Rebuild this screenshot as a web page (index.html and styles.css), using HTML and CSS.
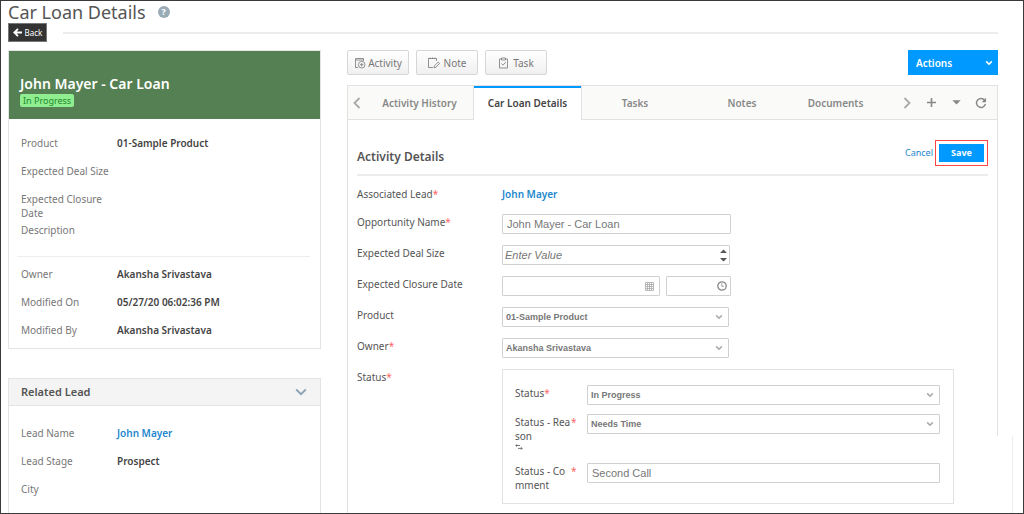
FILE: index.html
```html
<!DOCTYPE html>
<html lang="en">
<head>
<meta charset="utf-8">
<title>Car Loan Details</title>
<link rel="stylesheet" href="styles.css">
</head>
<body class="page">
<svg class="defs" width="0" height="0" aria-hidden="true">
  <symbol id="chev" viewBox="0 0 8 8"><path d="M1.2 2.4 4 5.2 6.8 2.4" fill="none" stroke="currentColor" stroke-width="1.6"/></symbol>
</svg>
<header class="top">
  <div class="title-row">
    <h1 class="title">Car Loan Details</h1>
    <button class="help" aria-label="Help">?</button>
  </div>
  <div class="back-row">
    <button class="back"><svg width="9" height="9" viewBox="0 0 9 9" aria-hidden="true"><path d="M9 4.5H1.5M5 .8 1.3 4.5 5 8.2" fill="none" stroke="currentColor" stroke-width="1.8"/></svg>Back</button>
    <div class="rule"></div>
  </div>
</header>
<div class="columns">
  <aside class="side">
    <section class="card">
      <div class="hero">
        <h2 class="hero-name">John Mayer - Car Loan</h2>
        <span class="badge">In Progress</span>
      </div>
      <dl class="facts">
        <div class="fact"><dt>Product</dt><dd>01-Sample Product</dd></div>
        <div class="fact"><dt>Expected Deal Size</dt><dd></dd></div>
        <div class="fact"><dt>Expected Closure<br>Date</dt><dd></dd></div>
        <div class="fact"><dt>Description</dt><dd></dd></div>
      </dl>
      <dl class="facts facts-meta">
        <div class="fact"><dt>Owner</dt><dd>Akansha Srivastava</dd></div>
        <div class="fact"><dt>Modified On</dt><dd>05/27/20 06:02:36 PM</dd></div>
        <div class="fact"><dt>Modified By</dt><dd>Akansha Srivastava</dd></div>
      </dl>
    </section>
    <section class="card related">
      <div class="related-head">
        <h2 class="related-title">Related Lead</h2>
        <button class="plain slate" aria-label="Collapse"><svg width="12" height="8" viewBox="0 0 12 8"><path d="M1.2 1.5 6 6.2l4.800-4.700" fill="none" stroke="currentColor" stroke-width="1.900"/></svg></button>
      </div>
      <dl class="facts facts-lead">
        <div class="fact"><dt>Lead Name</dt><dd><a class="link" href="#">John Mayer</a></dd></div>
        <div class="fact"><dt>Lead Stage</dt><dd>Prospect</dd></div>
        <div class="fact"><dt>City</dt><dd></dd></div>
      </dl>
    </section>
  </aside>
  <main class="main">
    <div class="toolbar">
      <button class="tool"><svg width="12" height="12" viewBox="0 0 12 12" fill="none" stroke="currentColor" stroke-width=".8" aria-hidden="true"><path d="M4 10.500H1.500v-9h8V4M1.500 3h8"/><circle cx="7.700" cy="7.700" r="3.300"/><path d="M7.700 6v3.400M6 7.700h3.400"/></svg>Activity</button>
      <button class="tool tool-wide"><svg width="12" height="12" viewBox="0 0 12 12" fill="none" stroke="currentColor" stroke-width=".8" aria-hidden="true"><path d="M8.500 4V1.500h-8v9H5M2 .5v1.500M4.500.5v1.500M7 .5v1.500"/><path d="m6 10.800.5-2L10.200 5l1.400 1.400L8 10.200z"/></svg>Note</button>
      <button class="tool tool-wide"><svg width="11" height="12" viewBox="0 0 11 12" fill="none" stroke="currentColor" stroke-width=".8" aria-hidden="true"><path d="M3.500 2h-2v9h8V2h-2M3.500 1h4v2h-4zM3.300 6.500 5 8.200 7.800 5"/></svg>Task</button>
      <button class="actions">Actions<svg width="8" height="8" aria-hidden="true"><use href="#chev"/></svg></button>
    </div>
    <div class="panel">
      <nav class="tabs">
        <button class="plain scroll" aria-label="Previous tabs"><svg width="8" height="12" viewBox="0 0 8 12"><path d="M6.500 1 1.500 6l5 5" fill="none" stroke="currentColor" stroke-width="1.800"/></svg></button>
        <button class="tab">Activity History</button>
        <button class="tab tab-on">Car Loan Details</button>
        <button class="tab">Tasks</button>
        <button class="tab">Notes</button>
        <button class="tab">Documents</button>
        <div class="tab-tools">
          <button class="plain" aria-label="Next tabs"><svg width="8" height="12" viewBox="0 0 8 12"><path d="m1.500 1 5 5-5 5" fill="none" stroke="currentColor" stroke-width="1.800"/></svg></button>
          <button class="plain dark" aria-label="Add tab"><svg width="9" height="9" viewBox="0 0 9 9"><path d="M4.500 0v9M0 4.500h9" stroke="currentColor" stroke-width="1.600"/></svg></button>
          <button class="plain dark" aria-label="Tab menu"><svg width="9" height="5" viewBox="0 0 9 5"><path d="M.3.200h8.400L4.500 4.600z" fill="currentColor"/></svg></button>
          <button class="plain dark" aria-label="Refresh"><svg width="12" height="12" viewBox="0 0 12 12"><path d="M9.600 3.200A4.500 4.500 0 1 0 10.400 7" fill="none" stroke="currentColor" stroke-width="1.400"/><path d="M11 .8v4.400H6.600z" fill="currentColor"/></svg></button>
        </div>
      </nav>
      <form class="form">
        <div class="form-head">
          <h2 class="form-title">Activity Details</h2>
          <a class="cancel" href="#">Cancel</a>
          <div class="save-mark"><button class="save" type="button">Save</button></div>
        </div>
        <div class="fields">
          <div class="row row-text"><span class="label">Associated Lead<i class="req">*</i></span><a class="link" href="#">John Mayer</a></div>
          <div class="row"><label class="label" for="name">Opportunity Name<i class="req">*</i></label><input class="box mid" id="name" type="text" value="John Mayer - Car Loan"></div>
          <div class="row"><label class="label" for="deal">Expected Deal Size</label><div class="wrap mid"><input class="box deal" id="deal" type="number" placeholder="Enter Value"><svg class="adorn spin" width="7" height="13" viewBox="0 0 7 13" aria-hidden="true"><path d="M0 4 3.500.5 7 4zM0 9l3.500 3.500L7 9z" fill="currentColor"/></svg></div></div>
          <div class="row"><label class="label" for="date">Expected Closure Date</label>
            <div class="pair mid">
              <div class="wrap"><input class="box" id="date" type="text"><svg class="adorn" width="9" height="9" viewBox="0 0 9 9" fill="none" stroke="currentColor" aria-hidden="true"><path d="M.5.500h8v8h-8zM.5 2.500h8M.5 4.500h8M.5 6.500h8M2.500.500v8M4.500.500v8M6.500.500v8" stroke-width=".8"/></svg></div>
              <div class="wrap"><input class="box" id="time" type="text" aria-label="Closure time"><svg class="adorn clock" width="10" height="10" viewBox="0 0 10 10" fill="none" stroke="currentColor" aria-hidden="true"><circle cx="5" cy="5" r="4.200" stroke-width="1.300"/><path d="M4.800 2.300v3h2" stroke-width=".8"/></svg></div>
            </div></div>
          <div class="row"><label class="label" for="product">Product</label><div class="wrap mid-pick"><select class="box pick" id="product"><option>01-Sample Product</option></select><svg class="adorn" width="8" height="8" aria-hidden="true"><use href="#chev"/></svg></div></div>
          <div class="row"><label class="label" for="owner">Owner<i class="req">*</i></label><div class="wrap mid-pick"><select class="box pick" id="owner"><option>Akansha Srivastava</option></select><svg class="adorn" width="8" height="8" aria-hidden="true"><use href="#chev"/></svg></div></div>
          <div class="row"><span class="label">Status<i class="req">*</i></span>
            <div class="group">
              <div class="sub"><label class="sub-label" for="status">Status<i class="req">*</i></label><div class="wrap"><select class="box pick" id="status"><option>In Progress</option></select><svg class="adorn" width="8" height="8" aria-hidden="true"><use href="#chev"/></svg></div></div>
              <div class="sub sub-tall"><label class="sub-label" for="reason"><span class="sub-text">Status - Rea<br>son<svg class="link-icon" width="8" height="6" viewBox="0 0 8 6" fill="none" stroke="currentColor" stroke-width=".8" aria-hidden="true"><path d="M5 1.500H.8M2 .3.800 1.500 2 2.700M3 4.400h4.200M6 3.200l1.200 1.200L6 5.600"/></svg></span><i class="req">*</i></label><div class="wrap"><select class="box pick" id="reason"><option>Needs Time</option></select><svg class="adorn" width="8" height="8" aria-hidden="true"><use href="#chev"/></svg></div></div>
              <div class="sub"><label class="sub-label" for="comment"><span class="sub-text">Status - Co<br>mment</span><i class="req">*</i></label><input class="box" id="comment" type="text" value="Second Call"></div>
            </div></div>
        </div>
      </form>
      <div class="edges" aria-hidden="true"><div class="edge-top"></div><div class="edge-low"></div></div>
    </div>
  </main>
</div>
</body>
</html>
```

FILE: styles.css
```css
* { box-sizing: border-box; }
.page {
  margin: 0;
  height: 100vh;
  border: 1px solid #3a3a3a;
  overflow: hidden;
  display: flex;
  flex-direction: column;
  background: #fff;
  color: #555;
  font: 10px/14px "Noto Sans", "Open Sans", sans-serif;
}
.defs { position: absolute; }
button, input, select { font: inherit; margin: 0; }
button { cursor: pointer; }
svg { display: block; flex: none; }
h1, h2, dl, dd { margin: 0; }
.link { color: #2287cd; font-weight: 600; text-decoration: none; }
.req { color: #f66; font-style: normal; }
.plain { display: flex; align-items: center; justify-content: center; padding: 0; border: 0; background: none; color: #aaa; }
.dark { color: #888; }
.slate { color: #8ea3b8; }

.top { padding: 0 25px 0 7px; }
.title-row { display: flex; align-items: center; gap: 12px; height: 22px; }
.title { font-size: 18px; line-height: 22px; font-weight: 400; }
.help { width: 12px; height: 12px; padding: 0; border: 0; border-radius: 50%; background: #9aabb8; color: #fff; font-size: 9px; line-height: 12px; font-weight: 700; }
.back-row { display: flex; align-items: center; gap: 16px; }
.back { display: flex; align-items: center; justify-content: center; gap: 3px; width: 39px; height: 19px; padding: 0; border: 1px solid #777; background: #333; color: #fff; font-size: 8px; line-height: 10px; }
.rule { flex: 1; height: 2px; background: #ececec; }

.columns { flex: 1; min-height: 0; display: grid; grid-template-columns: 313px minmax(0, 1fr); gap: 26px; padding: 8px 25px 0 7px; }
.side { display: flex; flex-direction: column; gap: 29px; }
.card { flex: none; border: 1px solid #e4e4e4; }
.related { flex: 1 0 auto; border-bottom: 0; }
.hero { display: flex; flex-direction: column; align-items: flex-start; gap: 1px; height: 68px; padding: 24px 11px 0; background: #558053; }
.hero-name { color: #fff; font-size: 14px; line-height: 18px; font-weight: 600; }
.badge { padding: 0 3px; border-radius: 2px; background: #90ee90; color: #1d8a2d; font-size: 9px; line-height: 13px; }
.facts { margin: 0 10px 0 8px; padding: 17px 5px 5px 4px; }
.facts-meta { padding: 10px 5px 0 4px; border-top: 1px solid #eee; }
.facts-meta .fact:last-child { min-height: 25px; }
.facts-lead { padding: 20px 5px 0 4px; }
.fact { display: grid; grid-template-columns: 96px 1fr; min-height: 28px; padding-bottom: 3px; }
.fact dt { color: #777; }
.fact dd { color: #444; font-weight: 600; }
.related-head { display: flex; align-items: center; justify-content: space-between; height: 27px; padding: 0 13px 0 12px; border-bottom: 1px solid #e4e4e4; background: #f4f4f4; }
.related-title { font-size: 11px; line-height: 16px; font-weight: 600; }

.main { display: flex; flex-direction: column; gap: 10px; }
.toolbar { display: flex; gap: 7px; }
.tool { display: flex; align-items: center; justify-content: center; gap: 2px; width: 62px; height: 25px; padding: 0; border: 1px solid #d6d6d6; border-radius: 2px; background: linear-gradient(#fff, #f0f0f0); color: #777; }
.tool-wide { gap: 4px; }
.actions { display: flex; align-items: center; justify-content: space-between; width: 90px; height: 25px; margin-left: auto; padding: 0 5px 0 8px; border: 0; background: #09f; color: #fff; font-weight: 600; }
.panel { position: relative; flex: 1; border: 1px solid #e2e2e2; border-width: 1px 0 0 1px; }
.tabs { display: grid; grid-template-columns: 18px 107px 109px 106px 108px minmax(0, 1fr) 122px; height: 34px; margin-right: 1px; }
.tabs > * { background: #fafaf8; border-bottom: 1px solid #e2e2e2; }
.tab { padding: 0; border: 0; border-bottom: 1px solid #e2e2e2; color: #888; font-weight: 600; }
.tab-on { border: 1px solid #e2e2e2; border-width: 0 1px; background: #fff; color: #444; box-shadow: inset 0 2px #09f; }
.tab-tools { display: grid; grid-template-columns: repeat(4, 1fr); padding: 0 4px 0 20px; }

.form { padding: 0 10px 0 9px; }
.form-head { display: flex; align-items: center; height: 56px; padding-top: 12px; border-bottom: 2px solid #ececec; }
.form-title { font-size: 12px; line-height: 18px; padding-top: 8px; font-weight: 600; }
.cancel { margin-left: auto; color: #2287cd; font-size: 9px; text-decoration: none; }
.save-mark { margin-left: 2px; padding: 3px; border: 1px solid #f44; }
.save { display: block; width: 45px; height: 18px; padding: 0; border: 0; background: #09f; color: #fff; font-size: 9px; font-weight: 700; }
.fields { padding-top: 10px; line-height: 16px; }
.row { display: grid; grid-template-columns: 145px minmax(0, 1fr); min-height: 31px; }
.row-text { min-height: 28px; }
.mid { width: 228px; }
.mid-pick { width: 227px; }
.wrap { position: relative; }
.box { display: block; width: 100%; height: 20px; padding: 0 4px; border: 1px solid #d0d0d0; border-radius: 1px; background: #fff; color: #777; font: 11px/18px "Liberation Sans", Arial, sans-serif; outline: 0; }
.box.mid { width: 229px; }
.pick { appearance: none; padding: 0 3px; font-size: 9px; font-weight: 700; }
.deal { padding: 0 2px; appearance: textfield; }
.deal::-webkit-inner-spin-button { appearance: none; margin: 0; }
.deal::placeholder { color: #777; font-style: italic; }
.adorn { position: absolute; right: 6px; top: 6px; color: #aaa; pointer-events: none; }
.spin { right: 3px; top: 4px; color: #555; }
.clock { right: 4px; top: 5px; color: #888; }
.pair { display: grid; grid-template-columns: 158px 65px; gap: 6px; }
.group { width: 452px; max-width: 100%; padding: 15px 13px 20px 12px; border: 1px solid #e2e2e2; line-height: 14px; }
.sub { display: grid; grid-template-columns: 72px minmax(0, 1fr); min-height: 29px; }
.sub-tall { min-height: 49px; }
.sub:last-child { min-height: 20px; height: 20px; }
.sub-label { display: flex; padding-top: 1px; }
.sub-text { width: 56px; white-space: nowrap; }
.link-icon { margin-top: 1px; }
.edges { position: absolute; top: 0; right: -15px; bottom: 0; width: 16px; display: flex; flex-direction: column; pointer-events: none; }
.edge-top { height: 350px; border-left: 1px solid #e2e2e2; }
.edge-low { flex: 1; border-right: 1px solid #eee; }
```
